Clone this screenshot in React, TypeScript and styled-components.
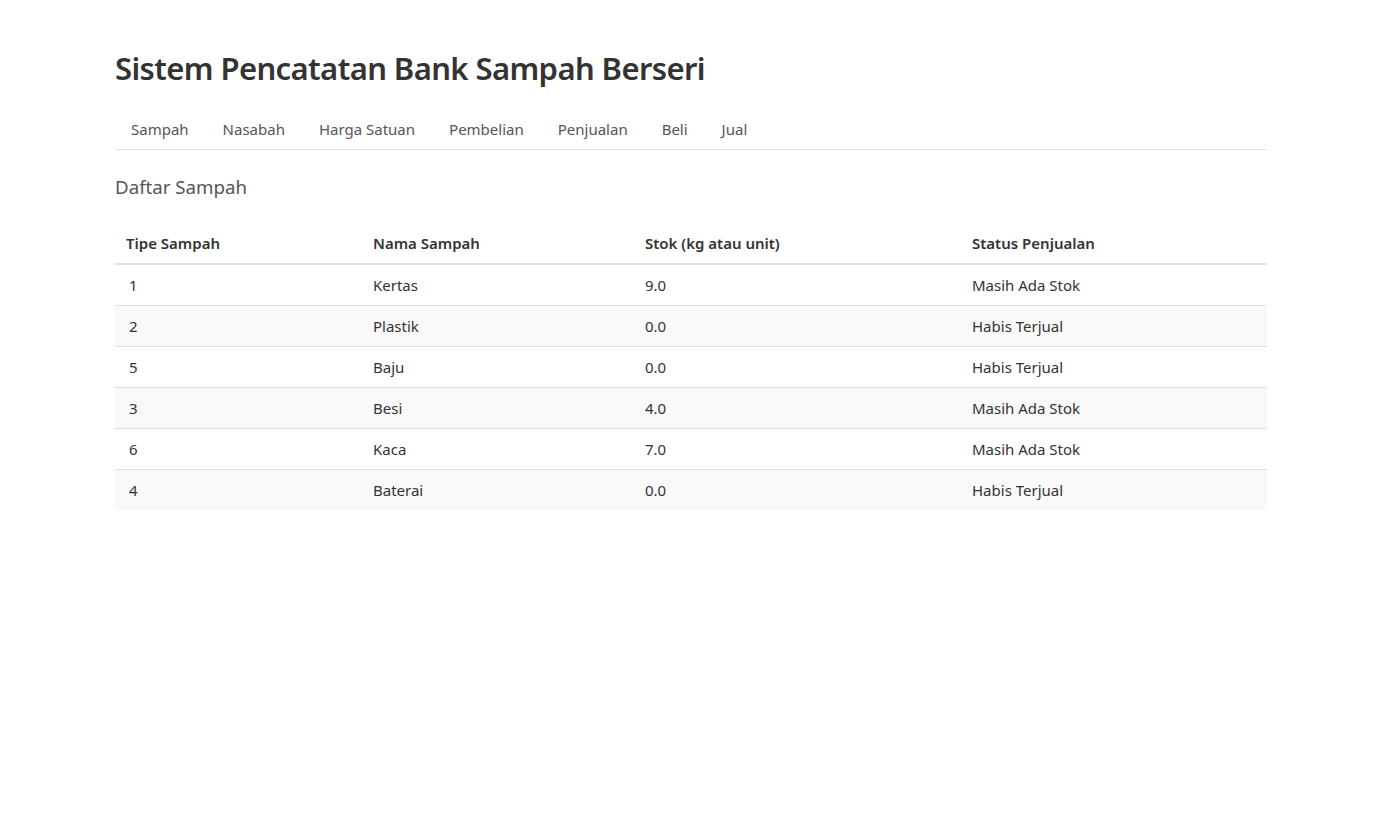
import React from "react";
import styled, { createGlobalStyle } from "styled-components";

const Global = createGlobalStyle`
  html, body { margin: 0; padding: 0; background: #fff; }
  body {
    font-family: "Noto Sans", "Open Sans", sans-serif;
    font-size: 16px;
    line-height: 1.5;
    color: #333;
  }
  * { box-sizing: border-box; }
`;

const Container = styled.div`
  width: 1152px;
  margin: 0 auto;
  padding-top: 46px;
`;

const Title = styled.h1`
  margin: 0 0 19px;
  font-size: 31px;
  line-height: 44px;
  letter-spacing: -0.6px;
  font-weight: 600;
  color: #333;
`;

const Nav = styled.ul`
  list-style: none;
  margin: 0;
  padding: 0;
  display: flex;
  gap: 2px;
  border-bottom: 1px solid #dee2e6;
`;

const NavLink = styled.a`
  display: block;
  padding: 8px 16px;
  font-size: 15px;
  line-height: 24px;
  color: #555;
  text-decoration: none;
  cursor: pointer;
`;

const SubTitle = styled.h4`
  margin: 25px 0 24px;
  font-size: 18.7px;
  line-height: 24px;
  font-weight: 400;
  color: #555;
`;

const Table = styled.table`
  width: 100%;
  border-collapse: collapse;
  font-size: 15px;
`;

const Th = styled.th<{ $w: number }>`
  width: ${(p) => p.$w}px;
  text-align: left;
  padding: 8px;
  line-height: 24px;
  font-weight: 600;
  color: #333;
  border-bottom: 2px solid #dee2e6;
  &:first-child { padding-left: 11px; }
`;

const Row = styled.tr<{ $striped: boolean }>`
  background: ${(p) => (p.$striped ? "#f9f9f9" : "#fff")};
  border-bottom: 1px solid #dee2e6;
  &:last-child { border-bottom: none; }
`;

const Td = styled.td`
  padding: 8px;
  line-height: 24px;
  color: #333;
  &:first-child { padding-left: 14px; }
`;

const navItems = ["Sampah", "Nasabah", "Harga Satuan", "Pembelian", "Penjualan", "Beli", "Jual"];

const rows = [
  ["1", "Kertas", "9.0", "Masih Ada Stok"],
  ["2", "Plastik", "0.0", "Habis Terjual"],
  ["5", "Baju", "0.0", "Habis Terjual"],
  ["3", "Besi", "4.0", "Masih Ada Stok"],
  ["6", "Kaca", "7.0", "Masih Ada Stok"],
  ["4", "Baterai", "0.0", "Habis Terjual"],
];

const cols = [
  { label: "Tipe Sampah", w: 250 },
  { label: "Nama Sampah", w: 272 },
  { label: "Stok (kg atau unit)", w: 327 },
  { label: "Status Penjualan", w: 303 },
];

export default function App() {
  return (
    <>
      <Global />
      <Container>
        <Title>Sistem Pencatatan Bank Sampah Berseri</Title>
        <Nav>
          {navItems.map((n) => (
            <li key={n}>
              <NavLink>{n}</NavLink>
            </li>
          ))}
        </Nav>
        <SubTitle>Daftar Sampah</SubTitle>
        <Table>
          <thead>
            <tr>
              {cols.map((c) => (
                <Th key={c.label} $w={c.w}>
                  {c.label}
                </Th>
              ))}
            </tr>
          </thead>
          <tbody>
            {rows.map((r, i) => (
              <Row key={i} $striped={i % 2 === 1}>
                {r.map((cell, j) => (
                  <Td key={j}>{cell}</Td>
                ))}
              </Row>
            ))}
          </tbody>
        </Table>
      </Container>
    </>
  );
}
